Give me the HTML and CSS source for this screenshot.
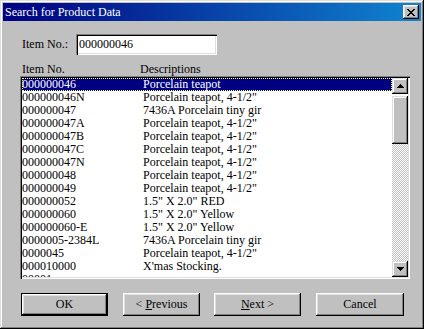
FILE: index.html
```html
<!DOCTYPE html>
<html>
<head>
<meta charset="utf-8">
<link rel="stylesheet" href="styles.css">
</head>
<body>
<div class="window">
  <div class="titlebar">
    <span class="title">Search for Product Data</span>
    <span class="close">
      <svg width="8" height="7" viewBox="0 0 8 7" shape-rendering="crispEdges">
        <path d="M0 0h2v1h-2zM6 0h2v1h-2zM1 1h2v1h-2zM5 1h2v1h-2zM2 2h4v1h-4zM3 3h2v1h-2zM2 4h4v1h-4zM1 5h2v1h-2zM5 5h2v1h-2zM0 6h2v1h-2zM6 6h2v1h-2z" fill="#000"/>
      </svg>
    </span>
  </div>
  <div class="content">
    <div class="item-row">
      <span class="label">Item No.:</span>
      <div class="input">000000046</div>
    </div>
    <div class="header">
      <span class="col1">Item No.</span>
      <span class="col2">Descriptions</span>
    </div>
    <div class="listbox">
      <div class="rows">
        <div class="row selected"><span class="c1">000000046</span><span class="c2">Porcelain teapot</span></div>
        <div class="row"><span class="c1">000000046N</span><span class="c2">Porcelain teapot, 4-1/2"</span></div>
        <div class="row"><span class="c1">000000047</span><span class="c2">7436A Porcelain tiny gir</span></div>
        <div class="row"><span class="c1">000000047A</span><span class="c2">Porcelain teapot, 4-1/2"</span></div>
        <div class="row"><span class="c1">000000047B</span><span class="c2">Porcelain teapot, 4-1/2"</span></div>
        <div class="row"><span class="c1">000000047C</span><span class="c2">Porcelain teapot, 4-1/2"</span></div>
        <div class="row"><span class="c1">000000047N</span><span class="c2">Porcelain teapot, 4-1/2"</span></div>
        <div class="row"><span class="c1">000000048</span><span class="c2">Porcelain teapot, 4-1/2"</span></div>
        <div class="row"><span class="c1">000000049</span><span class="c2">Porcelain teapot, 4-1/2"</span></div>
        <div class="row"><span class="c1">000000052</span><span class="c2">1.5" X 2.0" RED</span></div>
        <div class="row"><span class="c1">000000060</span><span class="c2">1.5" X 2.0" Yellow</span></div>
        <div class="row"><span class="c1">000000060-E</span><span class="c2">1.5" X 2.0" Yellow</span></div>
        <div class="row"><span class="c1">0000005-2384L</span><span class="c2">7436A Porcelain tiny gir</span></div>
        <div class="row"><span class="c1">0000045</span><span class="c2">Porcelain teapot, 4-1/2"</span></div>
        <div class="row"><span class="c1">000010000</span><span class="c2">X'mas Stocking.</span></div>
        <div class="row"><span class="c1">00001</span><span class="c2"></span></div>
      </div>
      <div class="scrollbar">
        <div class="sbtn">
          <svg width="7" height="4" viewBox="0 0 7 4" shape-rendering="crispEdges"><path d="M3 0h1v1h-1zM2 1h3v1h-3zM1 2h5v1h-5zM0 3h7v1h-7z" fill="#000"/></svg>
        </div>
        <div class="thumb"></div>
        <div class="track"></div>
        <div class="sbtn">
          <svg width="7" height="4" viewBox="0 0 7 4" shape-rendering="crispEdges"><path d="M0 0h7v1h-7zM1 1h5v1h-5zM2 2h3v1h-3zM3 3h1v1h-1z" fill="#000"/></svg>
        </div>
      </div>
    </div>
    <div class="buttons">
      <div class="btn default w87"><span class="bev">OK</span></div>
      <div class="btn w77 gap15"><span class="bev">&lt;&nbsp;<u>P</u>revious</span></div>
      <div class="btn w87 gap14"><span class="bev"><u>N</u>ext&nbsp;&gt;</span></div>
      <div class="btn w88 gap15"><span class="bev">Cancel</span></div>
    </div>
  </div>
</div>
</body>
</html>
```
FILE: styles.css
```css
html, body {
  margin: 0;
  padding: 0;
  background: #c0c0c0;
}
body {
  font-family: "Liberation Serif", "Times New Roman", serif;
  font-size: 12px;
  color: #000;
}
.window {
  width: 424px;
  height: 329px;
  box-sizing: border-box;
  padding: 3px;
  background: #c0c0c0;
  box-shadow: inset -1px -1px #000, inset 1px 1px #dfdfdf, inset -2px -2px #808080, inset 2px 2px #fff;
  overflow: hidden;
}
.titlebar {
  height: 18px;
  background: linear-gradient(to right, #000080, #1084d0);
  color: #fff;
  display: flex;
  align-items: center;
  justify-content: space-between;
  padding-left: 2px;
  padding-right: 2px;
}
.title {
  line-height: 18px;
  font-size: 12px;
  white-space: nowrap;
}
.close {
  width: 16px;
  height: 14px;
  background: #c0c0c0;
  box-shadow: inset -1px -1px #000, inset 1px 1px #fff, inset -2px -2px #808080, inset 2px 2px #dfdfdf;
  display: flex;
  align-items: center;
  justify-content: center;
  padding-right: 1px;
  box-sizing: border-box;
}
.close svg { display: block; }
.content {
  padding: 0 0 0 14px;
}
.item-row {
  margin-top: 13px;
  padding-left: 5px;
  display: flex;
  align-items: center;
  height: 21px;
}
.label {
  width: 54px;
  white-space: nowrap;
}
.input {
  width: 141px;
  height: 21px;
  box-sizing: border-box;
  background: #fff;
  box-shadow: inset 1px 1px #808080, inset 2px 2px #000, inset -1px -1px #fff, inset -2px -2px #dfdfdf;
  padding: 3px 0 0 3px;
  line-height: 15px;
}
.header {
  margin-top: 8px;
  padding-left: 5px;
  height: 13px;
  line-height: 13px;
  display: flex;
}
.header .col1 { width: 118px; }
.listbox {
  width: 390px;
  height: 203px;
  margin-left: 3px;
  box-sizing: border-box;
  padding: 2px;
  background: #fff;
  box-shadow: inset 1px 1px #808080, inset 2px 2px #000, inset -1px -1px #fff, inset -2px -2px #dfdfdf;
  display: flex;
  overflow: hidden;
}
.rows {
  flex: 1;
  overflow: hidden;
}
.row {
  height: 13px;
  line-height: 13px;
  display: flex;
  white-space: nowrap;
  padding-left: 0;
}
.row .c1 { width: 121px; }
.row.selected {
  background: #000080;
  color: #fff;
  outline: 1px dotted #ffff80;
  outline-offset: -1px;
}
.scrollbar {
  width: 16px;
  display: flex;
  flex-direction: column;
}
.sbtn {
  width: 16px;
  height: 16px;
  flex: none;
  background: #c0c0c0;
  box-shadow: inset -1px -1px #000, inset 1px 1px #dfdfdf, inset -2px -2px #808080, inset 2px 2px #fff;
  display: flex;
  align-items: center;
  justify-content: center;
}
.sbtn svg { display: block; }
.thumb {
  height: 48px;
  flex: none;
  margin-top: 2px;
  background: #c0c0c0;
  box-shadow: inset -1px -1px #000, inset 1px 1px #dfdfdf, inset -2px -2px #808080, inset 2px 2px #fff;
}
.track {
  flex: 1;
  background: repeating-conic-gradient(#c0c0c0 0 25%, #fff 0 50%) 0 0 / 2px 2px;
}
.buttons {
  margin-top: 14px;
  margin-left: 4px;
  display: flex;
}
.btn {
  height: 23px;
  box-sizing: border-box;
  display: flex;
}
.btn .bev {
  flex: 1;
  display: flex;
  align-items: center;
  justify-content: center;
  background: #c0c0c0;
  box-shadow: inset -1px -1px #000, inset 1px 1px #fff, inset -2px -2px #808080, inset 2px 2px #dfdfdf;
  white-space: nowrap;
  padding-bottom: 1px;
}
.btn.default {
  border: 1px solid #000;
}
.w87 { width: 87px; }
.w77 { width: 77px; }
.w88 { width: 88px; }
.gap15 { margin-left: 15px; }
.gap14 { margin-left: 14px; }
```
